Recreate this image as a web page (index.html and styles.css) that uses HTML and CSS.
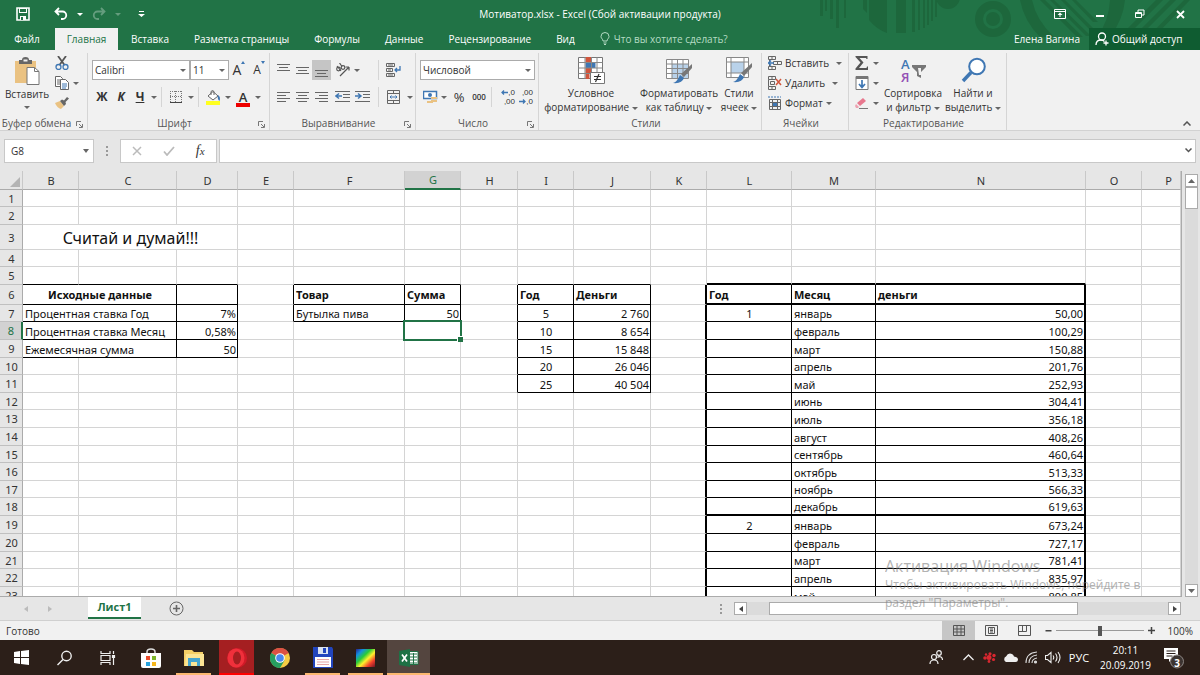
FILE: index.html
```html
<!DOCTYPE html>
<html lang="ru">
<head>
<meta charset="utf-8">
<title>Мотиватор.xlsx - Excel</title>
<link rel="stylesheet" href="styles.css">
</head>
<body>
<header class="top">
  <svg class="pattern" width="380" height="50" viewBox="0 0 380 50" fill="#1d673c">
    <path d="M0 0h3v16h-3zM5 0h2v11h-2zM10 0h3v19h-3zM16 0h3v28h-3zM24 0h2v18h-2z"/>
    <path d="M43 0h4v13l-4-4zM49 0h18v33a40 40 0 0 1-18-13zM76 0h10v33h-10zM92 0h3v32h-3zM98 0h2v30h-2zM103 0h2v28h-2zM107 0h2v25h-2zM111 0h2v21h-2zM115 0h2v17h-2z"/>
    <circle cx="128" cy="-3" r="12"/>
    <g fill="none" stroke="#1d673c"><circle cx="173" cy="19" r="14" stroke-width="8"/></g><circle cx="173" cy="19" r="7"/>
    <path d="M200 0h12q4 20 22 37h-14q-16-16-20-37zM220 0h5l38 37h-6zM230 0h4l37 36h-5zM241 0h4l30 30h-5zM252 0h4l22 22h-5zM290 0h15q-2 20-15 37h-13q12-16 13-37zM336 0h7l-30 30h-7zM350 0h6l-34 34h-6zM364 0h6l-36 37h-6z"/>
  </svg>
  <div class="titlebar">
    <div class="qat">
      <button class="w46" aria-label="Сохранить"><svg width="14" height="14" viewBox="0 0 14 14"><path d="M1 1h12v12H1z" fill="none" stroke="#fff" stroke-width="1.6"/><path d="M3 1h8v5H3z" fill="#fff"/><path d="M4 2h6v3H4z" fill="#217346"/><path d="M4 9h6v4H4z" fill="#fff"/><path d="M5 10h2v3H5z" fill="#217346"/></svg></button>
      <button class="w30" aria-label="Отменить"><svg width="14" height="14" viewBox="0 0 14 14" fill="none" stroke="#fff" stroke-width="1.8"><path d="M5 1 1.500 4.500 5 8M2 4.500h6.500a3.700 3.700 0 0 1 0 7.500H7"/></svg></button>
      <button class="w8" aria-label="История отмены"><i class="caret"></i></button>
      <button class="w30 dim" aria-label="Вернуть"><svg width="14" height="14" viewBox="0 0 14 14" fill="none" stroke="#fff" stroke-width="1.800"><path d="M9 1l3.500 3.500L9 8M12 4.500H5.500a3.700 3.700 0 0 0 0 7.500H7"/></svg></button>
      <button class="w8 dim" aria-label="История возврата"><i class="caret"></i></button>
      <button class="w39" aria-label="Настройка панели"><svg width="7" height="7" viewBox="0 0 7 7" fill="#fff"><path d="M1 0h5v1H1zM0 3h7L3.500 6z"/></svg></button>
    </div>
    <div class="title">Мотиватор.xlsx - Excel (Сбой активации продукта)</div>
    <div class="winbtns">
      <button aria-label="Параметры ленты"><svg width="12" height="10" viewBox="0 0 12 10"><path d="M.5.5h11v9H.5zM.5 2.500h11" fill="none" stroke="#fff"/><path d="M6 3.500 3.500 6h2v2h1V6h2z" fill="#fff"/></svg></button>
      <button aria-label="Свернуть"><svg width="9" height="9" viewBox="0 0 9 9"><path d="M0 5h8v2H0z" fill="#fff"/></svg></button>
      <button aria-label="Восстановить"><svg width="10" height="10" viewBox="0 0 10 10" fill="none" stroke="#fff"><path d="M.5 3.500h6v5h-6zM.5 4.500h6M3 3V1h6v5H7"/></svg></button>
      <button aria-label="Закрыть"><svg width="9" height="9" viewBox="0 0 9 9" stroke="#fff" stroke-width="1.800"><path d="M1 1l7 7M8 1 1 8"/></svg></button>
    </div>
  </div>
  <nav class="tabs">
    <button class="file">Файл</button><button class="on">Главная</button><button>Вставка</button><button>Разметка страницы</button><button>Формулы</button><button>Данные</button><button>Рецензирование</button><button>Вид</button>
    <button class="tell"><svg width="10" height="14" viewBox="0 0 10 14" fill="none" stroke="#b5dcc4"><path d="M3 9C3 7 1 6.500 1 4.500a4 4 0 0 1 8 0C9 6.500 7 7 7 9zM3.500 11h3M4 12.500h2"/></svg>Что вы хотите сделать?</button>
    <span class="user">Елена Вагина</span>
    <button class="share"><svg width="14" height="14" viewBox="0 0 14 14" fill="none" stroke="#fff" stroke-width="1.300"><circle cx="7" cy="4.500" r="3.500"/><path d="M1 13c0-3 2-5 5-5 1.500 0 2.500.5 3.500 1.500M11 8.500v5M8.500 11h5"/></svg>Общий доступ</button>
  </nav>
</header>

<section class="ribbon">
  <div class="group clip">
    <div class="body">
      <button class="big paste"><svg width="26" height="28" viewBox="0 0 26 28"><path d="M1 4h21v22H1z" fill="#eac282"/><path d="M5 3h3q0-3 3.500-3T15 3h3v4H5z" fill="#666"/><path d="M9.500 2.500h4v2h-4z" fill="#f1f1f1"/><path d="M13 10.500h7.500l4.500 4V27.500H13z" fill="#fff" stroke="#777"/><path d="M20.500 10.500v4H25" fill="none" stroke="#777"/></svg><span>Вставить</span><i class="caret"></i></button>
      <div class="col">
        <button aria-label="Вырезать"><svg width="14" height="14" viewBox="0 0 14 14" fill="none"><path d="M3 0l6.500 9M11 0 4.500 9" stroke="#555" stroke-width="1.800"/><circle cx="3.500" cy="11" r="2.500" stroke="#3f77b3" stroke-width="1.300"/><circle cx="10.500" cy="11" r="2.500" stroke="#3f77b3" stroke-width="1.300"/></svg></button>
        <button aria-label="Копировать"><svg width="14" height="14" viewBox="0 0 14 14" fill="#fff" stroke="#666"><path d="M.5.5h5l2 2v8h-7zM2 4h3M2 6h3M2 8h3"/><path d="M5.500 3.500h5l3 3v7h-8z"/><path d="M7 8h5M7 10h5M7 12h4" stroke="#3f77b3"/></svg></button>
        <button aria-label="Формат по образцу"><svg width="14" height="12" viewBox="0 0 14 12"><path d="M0 6l5-2 4 5-3 3q-4-1-6-6z" fill="#eac282"/><path d="M5 4l2-1.500 2 1L12 0l2 1.500-3.500 3.500.5 2-2 2z" fill="#666"/></svg></button>
      </div>
      <button class="copyarr" aria-label="Варианты копирования"><i class="caret"></i></button>
    </div>
    <div class="label">Буфер обмена<svg class="launch" width="7" height="7" viewBox="0 0 7 7" fill="none" stroke="#777"><path d="M.5 5V.5H5M3 3l3 3M6.500 3v3.500H3"/></svg></div>
  </div>

  <div class="group font">
    <div class="body rows">
      <div class="row">
        <span class="sel w98"><select aria-label="Шрифт"><option>Calibri</option></select><i class="caret"></i></span>
        <span class="sel w39"><select aria-label="Размер"><option>11</option></select><i class="caret"></i></span>
        <button class="w20 grow" aria-label="Увеличить">А<svg width="4" height="3" viewBox="0 0 4 3"><path d="M0 3h4L2 0z" fill="#3f77b3"/></svg></button>
        <button class="w20 shrink" aria-label="Уменьшить">А<svg width="4" height="3" viewBox="0 0 4 3"><path d="M0 0h4L2 3z" fill="#3f77b3"/></svg></button>
      </div>
      <div class="row">
        <button class="w20 fmt"><b>Ж</b></button><button class="w18 fmt"><b><em>К</em></b></button><button class="w20 fmt"><b><u>Ч</u></b></button><button class="w8" aria-label="Подчеркивание"><i class="caret"></i></button>
        <i class="sep"></i>
        <button class="w22" aria-label="Границы"><svg width="12" height="12" viewBox="0 0 12 12"><path d="M.5 0v11M5.500 0v11M11.500 0v11M0 .5h12M0 5.500h12" stroke="#777" stroke-dasharray="1 1"/><path d="M0 11.500h12" stroke="#444"/></svg></button><button class="w8" aria-label="Выбор границ"><i class="caret"></i></button>
        <i class="sep"></i>
        <button class="w22" aria-label="Заливка"><svg width="15" height="15" viewBox="0 0 15 15"><path d="M2 6l5-4.500L12 6 7 10z" fill="#fff" stroke="#666"/><path d="M5 5V1.500q1.500-2 3 0V5" fill="none" stroke="#666"/><path d="M12 5q3 2 1.500 6Q11 9 12 5z" fill="#3f77b3"/><path d="M0 11h14v4H0z" fill="#ffff20"/></svg></button><button class="w8" aria-label="Цвет заливки"><i class="caret"></i></button>
        <button class="w22 acol" aria-label="Цвет текста">А</button><button class="w8" aria-label="Выбор цвета"><i class="caret"></i></button>
      </div>
    </div>
    <div class="label">Шрифт<svg class="launch" width="7" height="7" viewBox="0 0 7 7" fill="none" stroke="#777"><path d="M.5 5V.5H5M3 3l3 3M6.500 3v3.500H3"/></svg></div>
  </div>

  <div class="group align">
    <div class="body rows">
      <div class="row">
        <button class="w19" aria-label="По верхнему краю"><svg width="13" height="13" viewBox="0 0 13 13" stroke="#666"><path d="M0 .5h13M2 3.500h9M0 6.500h13"/></svg></button>
        <button class="w19" aria-label="Посередине"><svg width="13" height="13" viewBox="0 0 13 13" stroke="#666"><path d="M0 3.500h13M2 6.500h9M0 9.500h13"/></svg></button>
        <button class="w19 pressed" aria-label="По нижнему краю"><svg width="13" height="13" viewBox="0 0 13 13" stroke="#666"><path d="M0 6.500h13M2 9.500h9M0 12.500h13"/></svg></button>
        <button class="w22" aria-label="Ориентация"><svg width="15" height="14" viewBox="0 0 15 14" fill="none" stroke="#555" stroke-width="1.200"><path d="M5 13 14 4M14 4h-3.500M14 4v3.500"/><circle cx="3.500" cy="6" r="1.800"/><path d="M2 3l4 5"/><circle cx="8" cy="4.500" r="1.800"/><path d="M4.500 0 7 3.500"/></svg></button><button class="w8" aria-label="Варианты ориентации"><i class="caret"></i></button>
        <i class="sep push"></i>
        <button class="w22" aria-label="Перенести текст"><svg width="15" height="14" viewBox="0 0 15 14" fill="none" stroke="#666"><path d="M.5.5h8v3h-8zM.5 5.500h6v3h-6zM.5 10.500h8v3h-8zM2 2h5M2 7h3M2 12h5"/><path d="M14 3v4H9M11 5 9 7l2 2" stroke="#3f77b3" stroke-width="1.300"/></svg></button><span class="w11"></span>
      </div>
      <div class="row">
        <button class="w19" aria-label="По левому краю"><svg width="13" height="11" viewBox="0 0 13 11" stroke="#666"><path d="M0 .5h13M0 3.500h9M0 6.500h13M0 9.500h9"/></svg></button>
        <button class="w19" aria-label="По центру"><svg width="13" height="11" viewBox="0 0 13 11" stroke="#666"><path d="M0 .5h13M2 3.500h9M0 6.500h13M2 9.500h9"/></svg></button>
        <button class="w19" aria-label="По правому краю"><svg width="13" height="11" viewBox="0 0 13 11" stroke="#666"><path d="M0 .5h13M4 3.500h9M0 6.500h13M4 9.500h9"/></svg></button>
        <button class="w22" aria-label="Уменьшить отступ"><svg width="15" height="12" viewBox="0 0 15 12" stroke="#666"><path d="M0 .5h15M8 3.500h7M8 6.500h7M0 10.500h15"/><path d="M1 5h6M4 2.500 1 5l3 2.500" fill="none" stroke="#3f77b3" stroke-width="1.500"/></svg></button>
        <button class="w18" aria-label="Увеличить отступ"><svg width="15" height="12" viewBox="0 0 15 12" stroke="#666"><path d="M0 .5h15M8 3.500h7M8 6.500h7M0 10.500h15"/><path d="M0 5h6M3 2.500 6 5 3 7.500" fill="none" stroke="#3f77b3" stroke-width="1.500"/></svg></button>
        <i class="sep push"></i>
        <button class="w22" aria-label="Объединить"><svg width="13" height="14" viewBox="0 0 13 14" fill="none" stroke="#666"><path d="M.5.5h12v13H.5zM.5 3.500h12M.5 10.500h12M6.500.5v3M6.500 10.500v3"/><path d="M3 7h7M4.500 5.500 3 7l1.500 1.500M8.500 5.500 10 7 8.500 8.500" stroke="#3f77b3"/></svg></button><button class="w11" aria-label="Варианты объединения"><i class="caret"></i></button>
      </div>
    </div>
    <div class="label">Выравнивание<svg class="launch" width="7" height="7" viewBox="0 0 7 7" fill="none" stroke="#777"><path d="M.5 5V.5H5M3 3l3 3M6.500 3v3.500H3"/></svg></div>
  </div>

  <div class="group num">
    <div class="body rows">
      <div class="row"><span class="sel w115"><select aria-label="Числовой формат"><option>Числовой</option></select><i class="caret"></i></span></div>
      <div class="row">
        <button class="w20" aria-label="Денежный формат"><svg width="15" height="15" viewBox="0 0 15 15"><path d="M.5 1.500h13v7H.5z" fill="#fff" stroke="#3f77b3" stroke-width="1.500"/><circle cx="7" cy="5" r="2" fill="#3f77b3"/><path d="M8 7h6v2H8zM8 10h6v2H8zM4 11h6v2H4z" fill="#eac282"/></svg></button><button class="w8" aria-label="Валюта"><i class="caret"></i></button>
        <button class="w22 pct">%</button><button class="w18 ths">000</button>
        <i class="sep"></i>
        <button class="w20 dec" aria-label="Увеличить разрядность"><span><svg width="7" height="5" viewBox="0 0 7 5" fill="none" stroke="#3f77b3" stroke-width="1.300"><path d="M7 2.500H1M3 .5l-2 2 2 2"/></svg>,0</span><span>,00</span></button>
        <button class="w18 dec" aria-label="Уменьшить разрядность"><span>,00</span><span><svg width="7" height="5" viewBox="0 0 7 5" fill="none" stroke="#3f77b3" stroke-width="1.300"><path d="M0 2.500h6M4 .5l2 2-2 2"/></svg>,0</span></button>
      </div>
    </div>
    <div class="label">Число<svg class="launch" width="7" height="7" viewBox="0 0 7 7" fill="none" stroke="#777"><path d="M.5 5V.5H5M3 3l3 3M6.500 3v3.500H3"/></svg></div>
  </div>

  <div class="group styles">
    <div class="body">
      <button class="big w100"><svg width="27" height="27" viewBox="0 0 27 27"><path d="M.5.5h24v21H.5z" fill="#fff" stroke="#777"/><path d="M7.500 0h6v5h-6zM7.500 11h6v5h-6z" fill="#d1553c"/><path d="M7.500 6h10v5h-10z" fill="#3f77b3"/><path d="M7.500 17h4v5h-4z" fill="#d1553c"/><path d="M.5 5.500h24M.5 11h24M.5 16.500h24M7 0v22M13.500 0v22M19 0v22" fill="none" stroke="#888"/><path d="M12.500 15.500h14v11h-14z" fill="#fff" stroke="#777"/><path d="M16 19.500h7M16 22.500h7M21 17l-3.500 8" stroke="#333" stroke-width="1.200"/></svg><span>Условное</span><span>форматирование <i class="caret"></i></span></button>
      <button class="big w76"><svg width="27" height="27" viewBox="0 0 27 27"><path d="M.5 2.500h22v19H.5z" fill="#fff" stroke="#888"/><path d="M6 7h16v14H6z" fill="#b9d2ea"/><path d="M.5 7h22M.5 11.500h22M.5 16.500h22M6 2v20M11.500 2v20M17 2v20" stroke="#888" fill="none"/><path d="M26 7v4l-8 9-3-3z" fill="#777"/><path d="M14 18l4 3q-2 6-11 5 4-1 7-8z" fill="#3f77b3"/></svg><span>Форматировать</span><span>как таблицу <i class="caret"></i></span></button>
      <button class="big w44"><svg width="27" height="27" viewBox="0 0 27 27"><path d="M.5.5h22v20H.5z" fill="#fff" stroke="#888"/><path d="M5 5h13v11H5z" fill="#b9d2ea"/><path d="M.5 5h22M.5 16h22M5 0v20M18 0v20" stroke="#888" fill="none"/><path d="M26 6v4l-8 9-3-3z" fill="#777"/><path d="M14 17l4 3q-2 6-11 5 4-1 7-8z" fill="#3f77b3"/></svg><span>Стили</span><span>ячеек <i class="caret"></i></span></button>
    </div>
    <div class="label">Стили</div>
  </div>

  <div class="group cells">
    <div class="body lines">
      <button><svg width="14" height="14" viewBox="0 0 14 14" fill="none" stroke="#666"><path d="M.5.5h7v3h-7zM4 .5v3M.5 10.500h7v3h-7zM4 10.500v3M5.500 5.500h8v3h-8zM9.500 5.500v3M1.500 3.500v7"/><path d="M0 7h6M3 4.500.500 7 3 9.500" stroke="#3f77b3" stroke-width="1.400"/></svg><span>Вставить</span><i class="caret wide"></i></button>
      <button><svg width="14" height="14" viewBox="0 0 14 14" fill="none" stroke="#666"><path d="M.5.5h7v3h-7zM4 .5v3M.5 10.500h7v3h-7zM4 10.500v3M2.500 5.500h4v3h-4zM.5 3.500v7"/><path d="M8 3l5 6M13 3 8 9" stroke="#d1553c" stroke-width="1.500"/></svg><span>Удалить</span><i class="caret wide"></i></button>
      <button><svg width="14" height="14" viewBox="0 0 14 14" fill="none" stroke="#666"><path d="M1.500 3.500h11v10h-11zM1.500 6.500h11M1.500 10.500h11M4.500 3.500v10M9.500 3.500v10"/><path d="M4.500 6.500h5v4h-5z" fill="#3f77b3"/><path d="M0 1h13" stroke="#3f77b3" stroke-dasharray="2 1"/></svg><span>Формат</span><i class="caret"></i></button>
    </div>
    <div class="label">Ячейки</div>
  </div>

  <div class="group edit">
    <div class="body">
      <div class="lines">
        <button aria-label="Сумма"><svg width="14" height="14" viewBox="0 0 14 14"><path d="M.5 0h12v3h-1L11 2H4.500l4 4.500L4 12h7.500l.5-1.500h1V14H.5v-1.500l5-6-5-5.500z" fill="#555"/></svg><i class="caret"></i></button>
        <button aria-label="Заполнить"><svg width="14" height="14" viewBox="0 0 14 14"><path d="M1 .5h12v13H1z" fill="#fff" stroke="#777"/><path d="M1 0h12v3H1z" fill="#777"/><path d="M7 4v7M4 8l3 3.500L10 8" fill="none" stroke="#3f77b3" stroke-width="1.700"/></svg><i class="caret"></i></button>
        <button aria-label="Очистить"><svg width="14" height="13" viewBox="0 0 14 13"><path d="M2 6l6-5 3 3-6 5z" fill="#e8788e"/><path d="M1 7l3 3-1 1H1L0 9z" fill="#eda3b1"/><path d="M4 11.500h9" stroke="#777"/></svg><i class="caret"></i></button>
      </div>
      <button class="big w64"><svg width="27" height="27" viewBox="0 0 27 27"><text x="1" y="12" class="az" fill="#3f77b3">А</text><text x="1" y="25" class="az" fill="#9350b5">Я</text><path d="M12 8h14v2l-5 5v6l-4-2v-4l-5-5z" fill="#777"/><path d="M18 11h3v7h-2z" fill="#f1f1f1"/></svg><span>Сортировка</span><span>и фильтр <i class="caret"></i></span></button>
      <button class="big w56"><svg width="27" height="27" viewBox="0 0 27 27" fill="none"><circle cx="17" cy="9.500" r="7.800" fill="#fff" stroke="#3f77b3" stroke-width="2"/><path d="M11 15.500 3 24" stroke="#3f77b3" stroke-width="3.500"/></svg><span>Найти и</span><span>выделить <i class="caret"></i></span></button>
    </div>
    <div class="label">Редактирование</div>
  </div>
  <button class="collapse" aria-label="Свернуть ленту"><svg width="8" height="5" viewBox="0 0 8 5" fill="none" stroke="#555" stroke-width="1.500"><path d="M.5 4.500 4 1l3.500 3.500"/></svg></button>
</section>

<section class="formula">
  <span class="namebox"><input aria-label="Имя ячейки" value="G8"><i class="caret"></i></span>
  <svg class="dots" width="2" height="10" viewBox="0 0 2 10" fill="#999"><path d="M0 0h2v2H0zM0 4h2v2H0zM0 8h2v2H0z"/></svg>
  <div class="fx">
    <button aria-label="Отмена"><svg width="10" height="10" viewBox="0 0 10 10" stroke="#bbb" stroke-width="1.500"><path d="M1 1l8 8M9 1 1 9"/></svg></button>
    <button aria-label="Ввод"><svg width="12" height="10" viewBox="0 0 12 10" fill="none" stroke="#bbb" stroke-width="1.800"><path d="M1 5.500 4 9l7-8"/></svg></button>
    <button class="fn"><i>f<small>x</small></i></button>
  </div>
  <span class="finput"><input aria-label="Строка формул"><svg width="7" height="5" viewBox="0 0 7 5" fill="none" stroke="#555" stroke-width="1.500"><path d="M.5.500 3.500 3.500 6.500.500"/></svg></span>
</section>

<main class="sheet">
  <div class="gridwrap">
  <table>
    <colgroup><col class="c23"><col class="c56"><col class="c98"><col class="c61"><col class="c56"><col class="c111"><col class="c56"><col class="c57"><col class="c56"><col class="c77"><col class="c56"><col class="c85"><col class="c84"><col class="c210"><col class="c56"><col></colgroup>
    <thead><tr><th class="corner"><svg width="10" height="10" viewBox="0 0 10 10"><path d="M10 0v10H0z" fill="#b4b4b4"/></svg></th><th>B<th>C<th>D<th>E<th>F<th class="cur">G<th>H<th>I<th>J<th>K<th>L<th>M<th>N<th>O<th class="p">P</tr></thead>
    <tbody>
    <tr class="h17"><th>1<td><td><td><td><td><td><td><td><td><td><td><td><td><td><td></tr>
    <tr class="h18"><th>2<td><td><td><td><td><td><td><td><td><td><td><td><td><td><td></tr>
    <tr class="h25"><th>3<td colspan="3" class="head">Считай и думай!!!<td><td><td><td><td><td><td><td><td><td><td><td></tr>
    <tr class="h17"><th>4<td><td><td><td><td><td><td><td><td><td><td><td><td><td><td></tr>
    <tr class="h18"><th>5<td class="b"><td class="b"><td class="b"><td><td class="b"><td class="b"><td><td class="b"><td class="b"><td><td class="bb"><td class="bb"><td class="bb"><td><td></tr>
    <tr class="h20 bold"><th>6<td colspan="2" class="x c">Исходные данные<td class="x"><td class="r"><td class="x">Товар<td class="x">Сумма<td class="r"><td class="x">Год<td class="x">Деньги<td class="rr"><td class="r bb">Год<td class="r bb">Месяц<td class="rr bb">деньги<td><td></tr>
    <tr class="h17"><th>7<td colspan="2" class="x">Процентная ставка Год<td class="x n">7%<td class="r"><td class="x">Бутылка пива<td class="x n">50<td class="r"><td class="x c">5<td class="x n">2 760<td class="rr"><td class="x c">1<td class="x">январь<td class="rr b n">50,00<td><td></tr>
    <tr class="h18"><th class="cur">8<td colspan="2" class="x">Процентная ставка Месяц<td class="x n">0,58%<td><td><td class="active"><td class="r"><td class="x c">10<td class="x n">8 654<td class="rr"><td class="x"><td class="x">февраль<td class="rr b n">100,29<td><td></tr>
    <tr class="h18"><th>9<td colspan="2" class="x">Ежемесячная сумма<td class="x n">50<td><td><td><td class="r"><td class="x c">15<td class="x n">15 848<td class="rr"><td class="x"><td class="x">март<td class="rr b n">150,88<td><td></tr>
    <tr class="h17"><th>10<td><td><td><td><td><td><td class="r"><td class="x c">20<td class="x n">26 046<td class="rr"><td class="x"><td class="x">апрель<td class="rr b n">201,76<td><td></tr>
    <tr class="h18"><th>11<td><td><td><td><td><td><td class="r"><td class="x c">25<td class="x n">40 504<td class="rr"><td class="x"><td class="x">май<td class="rr b n">252,93<td><td></tr>
    <tr class="h17"><th>12<td><td><td><td><td><td><td><td><td><td class="rr"><td class="x"><td class="x">июнь<td class="rr b n">304,41<td><td></tr>
    <tr class="h18"><th>13<td><td><td><td><td><td><td><td><td><td class="rr"><td class="x"><td class="x">июль<td class="rr b n">356,18<td><td></tr>
    <tr class="h18"><th>14<td><td><td><td><td><td><td><td><td><td class="rr"><td class="x"><td class="x">август<td class="rr b n">408,26<td><td></tr>
    <tr class="h17"><th>15<td><td><td><td><td><td><td><td><td><td class="rr"><td class="x"><td class="x">сентябрь<td class="rr b n">460,64<td><td></tr>
    <tr class="h18"><th>16<td><td><td><td><td><td><td><td><td><td class="rr"><td class="x"><td class="x">октябрь<td class="rr b n">513,33<td><td></tr>
    <tr class="h17"><th>17<td><td><td><td><td><td><td><td><td><td class="rr"><td class="x"><td class="x">ноябрь<td class="rr b n">566,33<td><td></tr>
    <tr class="h18"><th>18<td><td><td><td><td><td><td><td><td><td class="rr"><td class="r bb"><td class="r bb">декабрь<td class="rr bb n">619,63<td><td></tr>
    <tr class="h18"><th>19<td><td><td><td><td><td><td><td><td><td class="rr"><td class="x c">2<td class="x">январь<td class="rr b n">673,24<td><td></tr>
    <tr class="h18"><th>20<td><td><td><td><td><td><td><td><td><td class="rr"><td class="x"><td class="x">февраль<td class="rr b n">727,17<td><td></tr>
    <tr class="h17"><th>21<td><td><td><td><td><td><td><td><td><td class="rr"><td class="x"><td class="x">март<td class="rr b n">781,41<td><td></tr>
    <tr class="h18"><th>22<td><td><td><td><td><td><td><td><td><td class="rr"><td class="x"><td class="x">апрель<td class="rr b n">835,97<td><td></tr>
    <tr class="h18"><th>23<td><td><td><td><td><td><td><td><td><td class="rr"><td class="x"><td class="x">май<td class="rr b n">890,85<td><td></tr>
    </tbody>
  </table>
  </div>
  <div class="vscroll">
    <button aria-label="Вверх"><svg width="7" height="4" viewBox="0 0 7 4"><path d="M0 4h7L3.500 0z" fill="#666"/></svg></button>
    <i class="thumb"></i>
    <button class="end" aria-label="Вниз"><svg width="7" height="4" viewBox="0 0 7 4"><path d="M0 0h7L3.500 4z" fill="#666"/></svg></button>
  </div>
</main>

<section class="sheettabs">
  <button class="nav" aria-label="Предыдущий лист"><svg width="4" height="6" viewBox="0 0 4 6"><path d="M4 0v6L0 3z" fill="#bbb"/></svg></button>
  <button class="nav" aria-label="Следующий лист"><svg width="4" height="6" viewBox="0 0 4 6"><path d="M0 0v6l4-3z" fill="#bbb"/></svg></button>
  <button class="sheettab">Лист1</button>
  <button class="add" aria-label="Новый лист"><svg width="15" height="15" viewBox="0 0 15 15" fill="none" stroke="#666"><circle cx="7.500" cy="7.500" r="6.500"/><path d="M7.500 4v7M4 7.500h7" stroke-width="1.600"/></svg></button>
  <svg class="dots hd" width="2" height="10" viewBox="0 0 2 10" fill="#999"><path d="M0 0h2v2H0zM0 4h2v2H0zM0 8h2v2H0z"/></svg>
  <div class="hscroll">
    <button aria-label="Влево"><svg width="4" height="6" viewBox="0 0 4 6"><path d="M4 0v6L0 3z" fill="#444"/></svg></button>
    <div class="track"><i class="thumb"></i></div>
    <button aria-label="Вправо"><svg width="4" height="6" viewBox="0 0 4 6"><path d="M0 0v6l4-3z" fill="#444"/></svg></button>
  </div>
</section>

<footer class="status">
  <span class="ready">Готово</span>
  <button class="view on" aria-label="Обычный"><svg width="12" height="11" viewBox="0 0 12 11" fill="none" stroke="#555"><path d="M.5.5h11v10H.5zM.5 4h11M.5 7h11M4 .5v10M8 .5v10"/></svg></button>
  <button class="view" aria-label="Разметка страницы"><svg width="13" height="11" viewBox="0 0 13 11" fill="none" stroke="#555"><path d="M.5.5h12v10H.5zM3.500 2.500h6v6h-6zM5 4h3M5 5.500h3M5 7h3"/></svg></button>
  <button class="view" aria-label="Страничный режим"><svg width="13" height="11" viewBox="0 0 13 11" fill="none" stroke="#555"><path d="M.5.5h12v10H.5zM4.500.5v6M8.500.5v6M.5 6.500h8"/></svg></button>
  <button class="zoomb" aria-label="Уменьшить"><svg width="7" height="7" viewBox="0 0 7 7"><path d="M.5 3h6v1.500h-6z" fill="#444"/></svg></button>
  <input type="range" aria-label="Масштаб" min="10" max="190" value="100">
  <button class="zoomb" aria-label="Увеличить"><svg width="7" height="7" viewBox="0 0 7 7"><path d="M0 3.500h7M3.500 0v7" stroke="#444" stroke-width="1.500"/></svg></button>
  <span class="pc">100%</span>
</footer>

<nav class="taskbar">
  <button aria-label="Пуск"><svg width="15" height="15" viewBox="0 0 15 15" fill="#fff"><path d="M0 2l6-1v6H0zM7 1l8-1v7H7zM0 8h6v6l-6-1zM7 8h8v7l-8-1z"/></svg></button>
  <button aria-label="Поиск"><svg width="16" height="16" viewBox="0 0 16 16" fill="none" stroke="#eee" stroke-width="1.400"><circle cx="9.500" cy="6" r="4.700"/><path d="M6 9.500.500 15"/></svg></button>
  <button aria-label="Представление задач"><svg width="16" height="14" viewBox="0 0 16 14" fill="none" stroke="#eee" stroke-width="1.200"><path d="M1 0v2.500h9V0M1 4.500h9v5H1zM1 14v-2.500h9V14M13.500 0v3M13.500 7v7"/><path d="M12.500 4.500h2v2h-2z" fill="#eee"/></svg></button>
  <button aria-label="Магазин"><svg width="20" height="20" viewBox="0 0 20 20"><path d="M6 6V4q0-3 4-3t4 3v2" fill="none" stroke="#ddd" stroke-width="1.500"/><path d="M0 5h20v13q0 2-2 2H2q-2 0-2-2z" fill="#fff"/><path d="M5 8h4v4H5z" fill="#ea4b2c"/><path d="M11 8h4v4h-4z" fill="#7db52a"/><path d="M5 14h4v4H5z" fill="#28a4df"/><path d="M11 14h4v4h-4z" fill="#f8b71c"/></svg></button>
  <button class="run" aria-label="Проводник"><svg width="20" height="18" viewBox="0 0 20 18"><path d="M0 1h8l2 2h9v14H0z" fill="#f4cf66"/><path d="M2 5h18v12H1z" fill="#fbe494"/><path d="M4 17V9h12v8h-3v-4H7v4z" fill="#45a5cf"/></svg></button>
  <button class="run opera" aria-label="Opera"><svg width="20" height="20" viewBox="0 0 20 20"><circle cx="10" cy="10" r="10" fill="#d01a28"/><ellipse cx="9" cy="10" rx="8.500" ry="9.500" fill="#f0303b"/><ellipse cx="10" cy="10" rx="4" ry="6.500" fill="#a51f21"/></svg></button>
  <button aria-label="Chrome"><svg width="20" height="20" viewBox="0 0 20 20"><circle cx="10" cy="10" r="10" fill="#f6cd45"/><path d="M10 10 1.300 5A10 10 0 0 1 18.700 5z" fill="#dc5144"/><path d="M10 10 1.300 5A10 10 0 0 0 10 20l4.500-7.500z" fill="#269e60"/><circle cx="10" cy="10" r="4.800" fill="#fff"/><circle cx="10" cy="10" r="3.800" fill="#4a88ef"/></svg></button>
  <button class="run" aria-label="Total Commander"><svg width="20" height="21" viewBox="0 0 20 21"><path d="M0 0h19l1 2v19H0z" fill="#2245bd"/><path d="M5 0h10v7H5z" fill="#d9e1ef"/><path d="M10 1h3v5h-3z" fill="#2245bd"/><path d="M2 10h16v10H2z" fill="#fff"/><path d="M4 12.500h12M4 15h12M4 17.500h12" stroke="#e6a6a6"/></svg></button>
  <button class="run" aria-label="Просмотр"><svg width="19" height="18" viewBox="0 0 19 18"><defs><linearGradient id="rb" x1="0" y1="0" x2="1" y2="1"><stop offset="0" stop-color="#27208f"/><stop offset=".2" stop-color="#148fe0"/><stop offset=".4" stop-color="#28cc38"/><stop offset=".58" stop-color="#fff22c"/><stop offset=".78" stop-color="#f4412b"/><stop offset="1" stop-color="#6f1527"/></linearGradient></defs><path d="M0 0h19v18H0z" fill="url(#rb)"/></svg></button>
  <button class="run cur" aria-label="Excel"><svg width="20" height="18" viewBox="0 0 20 18"><path d="M9 2.500h10v13H9z" fill="#fff" stroke="#1e7145"/><path d="M11 5h7M11 8h7M11 11h7M11 14h7M14.500 4v11" stroke="#1e7145"/><path d="M0 2l11-2v18L0 16z" fill="#1e7145"/><path d="M3 5.500l5 7M8 5.500l-5 7" stroke="#fff" stroke-width="1.700"/></svg></button>
  <div class="tray">
    <button class="people" aria-label="Люди"><svg width="14" height="15" viewBox="0 0 14 15" fill="none" stroke="#eee" stroke-width="1.200"><circle cx="5" cy="7" r="2.500"/><path d="M1 14q0-4 4-4t4 4"/><circle cx="10" cy="3" r="2.300"/><path d="M8.500 7.500Q10 6 12 7q1.500 1 1.500 3"/></svg></button>
    <button aria-label="Скрытые значки"><svg width="11" height="7" viewBox="0 0 11 7" fill="none" stroke="#eee" stroke-width="1.300"><path d="M.5 6 5.500 1l5 5"/></svg></button>
    <button aria-label="Антивирус"><svg width="13" height="11" viewBox="0 0 13 11" fill="#da2730"><circle cx="6" cy="5.500" r="2.500"/><circle cx="2" cy="6" r="1.800"/><circle cx="7" cy="1.800" r="1.600"/><circle cx="11" cy="3.500" r="1.700"/><circle cx="10.500" cy="7.500" r="1.600"/><circle cx="6" cy="9.500" r="1.400"/><circle cx="3" cy="2.500" r="1.200"/></svg></button>
    <button aria-label="OneDrive"><svg width="15" height="9" viewBox="0 0 15 9" fill="#eee"><path d="M3 9a3 3 0 0 1 0-5.500Q5-.5 9 1q1.500.5 2 2.500 4 .5 4 3Q15 9 12.500 9z"/></svg></button>
    <button aria-label="Сеть"><svg width="13" height="13" viewBox="0 0 13 13" fill="none" stroke="#ddd" stroke-width="1.100"><path d="M1 12Q1 2 12 1M4 12q0-7 8-8M7 12q0-4 5-5"/><circle cx="10.500" cy="11" r="1" fill="#ddd"/></svg></button>
    <button aria-label="Громкость"><svg width="16" height="13" viewBox="0 0 16 13" fill="none" stroke="#eee" stroke-width="1.100"><path d="M.5 4.500h2l3.500-3v10l-3.500-3h-2zM8 4.500q1.500 2 0 4M10.500 2.500q3 4 0 8M13 1q4 5.500 0 11"/></svg></button>
    <button class="lang">РУС</button>
    <button class="clock"><span>20:11</span><span>20.09.2019</span></button>
    <button class="note" aria-label="Уведомления"><svg width="22" height="22" viewBox="0 0 22 22"><path d="M1 1h14v11H9l-3 3v-3H1z" fill="#fff"/><path d="M3.500 4h9M3.500 6.500h9M3.500 9h6" stroke="#2b1f1a"/><circle cx="14" cy="14.500" r="6.500" fill="#3c3431" stroke="#8b8583"/></svg><b>3</b></button>
  </div>
</nav>

<aside class="watermark"><p class="wt">Активация Windows</p><p>Чтобы активировать Windows, перейдите в раздел "Параметры".</p></aside>
</body>
</html>
```
FILE: styles.css
```css
* { box-sizing: border-box; }
body {
  margin: 0;
  height: 100vh;
  display: flex;
  flex-direction: column;
  overflow: hidden;
  position: relative;
  background: #e6e6e6;
  color: #333;
  font: 10px/14px "Open Sans", "Noto Sans", sans-serif;
}
button {
  display: inline-flex;
  align-items: center;
  justify-content: center;
  flex: none;
  margin: 0;
  padding: 0;
  border: 0;
  background: none;
  color: inherit;
  font: inherit;
  white-space: nowrap;
}
svg { flex: none; }
input, select { font: inherit; color: inherit; border-radius: 0; }
.caret {
  display: inline-block;
  flex: none;
  border: 3px solid transparent;
  border-top-color: #666;
  border-bottom: 0;
  vertical-align: middle;
}
.w8 { width: 8px; }
.w11 { width: 11px; }
.w18 { width: 18px; }
.w19 { width: 19px; }
.w20 { width: 20px; }
.w22 { width: 22px; }
.w30 { width: 30px; }
.w39 { width: 39px; }
.w44 { width: 44px; }
.w46 { width: 46px; }
.w56 { width: 56px; }
.w64 { width: 64px; }
.w76 { width: 76px; }
.w98 { width: 98px; }
.w100 { width: 100px; }
.w115 { width: 115px; }

/* Title bar and ribbon tabs */
.top { position: relative; background: #217346; color: #fff; flex: none; font-weight: 500; }
.pattern { position: absolute; right: 0; top: 0; }
.titlebar { position: relative; display: flex; height: 28px; align-items: stretch; }
.qat, .winbtns { flex: 1; display: flex; }
.winbtns { justify-content: flex-end; }
.winbtns button { width: 40px; }
.titlebar .caret { border-top-color: #fff; }
.title { line-height: 29px; }
.dim { opacity: .3; }
.tabs { position: relative; display: flex; gap: 1px; height: 22px; }
.tabs button { padding: 0 12px; }
.tabs .file { width: 54px; }
.tabs .on { width: 63px; background: #f1f1f1; color: #217346; }
.tabs .tell { color: #b5dcc4; gap: 4px; }
.user { margin-left: auto; padding-right: 8px; line-height: 22px; }
.tabs .share { width: 111px; padding: 0 0 0 6px; justify-content: flex-start; gap: 3px; background: #0f5c31; }

/* Ribbon */
.ribbon { display: flex; height: 81px; flex: none; background: #f1f1f1; border-bottom: 1px solid #d2d2d2; padding-top: 3px; }
.group { display: flex; flex-direction: column; border-right: 1px solid #d5d5d5; flex: none; }
.body { flex: 1; display: flex; }
.label { position: relative; text-align: center; color: #555; padding-right: 8px; line-height: 13px; white-space: nowrap; }
.launch { position: absolute; right: 4px; top: 4px; }
.clip { width: 88px; }
.clip .label { padding: 0 14px 0 0; }
.font { width: 182px; }
.align { width: 146px; }
.num { width: 123px; }
.styles { width: 223px; }
.styles .body { padding-left: 2px; }
.cells { width: 87px; }
.edit { width: 158px; }
.rows { flex-direction: column; padding: 6px 0 0 4px; gap: 5px; }
.row { display: flex; height: 22px; align-items: center; }
.big { flex-direction: column; justify-content: flex-start; padding-top: 4px; }
.big svg { margin-bottom: 2px; }
.paste { width: 54px; }
.paste .caret { margin-top: 5px; }
.col { display: flex; flex-direction: column; width: 16px; }
.col button { height: 20px; }
.copyarr { width: 12px; height: 60px; }
.sel { position: relative; display: flex; }
.sel select { appearance: none; width: 100%; height: 20px; border: 1px solid #ababab; background: #fff; padding: 0 2px; outline: 0; }
.sel .caret { position: absolute; right: 4px; top: 9px; }
.grow, .shrink { align-items: flex-start; font-size: 14px; line-height: 18px; }
.shrink { font-size: 12px; }
.fmt { font-size: 12px; }
.sep { width: 1px; height: 20px; background: #d5d5d5; margin: 0 3px; }
.push { margin-left: auto; }
.pressed { background: #c5c5c5; height: 20px; }
.acol { font-weight: 600; font-size: 13px; line-height: 11px; position: relative; }
.acol::after { content: ""; position: absolute; left: 4px; right: 4px; bottom: -4px; height: 4px; background: #e00; }
.pct { font-size: 13px; }
.ths { font-size: 8px; font-weight: 600; }
.dec { flex-direction: column; align-items: flex-end; font: 8px/9px "Liberation Sans", sans-serif; }
.dec span { display: flex; align-items: center; }
.lines { display: flex; flex-direction: column; padding: 0 0 0 6px; }
.lines button { height: 20px; justify-content: flex-start; gap: 3px; }
.lines .wide { margin-left: 4px; }
.edit .lines { width: 32px; }
.edit .lines button { gap: 4px; }
.az { font: 600 13px "Open Sans", sans-serif; }
.collapse { margin-left: auto; width: 26px; align-self: flex-end; height: 14px; }

/* Formula bar */
.formula { display: flex; align-items: center; height: 40px; flex: none; padding: 0 4px; }
.namebox { position: relative; display: flex; width: 90px; }
.namebox input { width: 100%; height: 24px; border: 1px solid #c8c8c8; background: #fff; padding: 0 6px; }
.namebox .caret { position: absolute; right: 5px; top: 10px; border-top-width: 4px; }
.dots { margin: 0 12px; }
.fx { display: flex; width: 97px; height: 24px; background: #fff; border: 1px solid #c8c8c8; }
.fx button { flex: 1; }
.fn { font: 14px/14px "Liberation Serif", serif; }
.fn small { font-size: 11px; }
.finput { position: relative; display: flex; flex: 1; margin-left: 2px; }
.finput input { width: 100%; height: 24px; border: 1px solid #c8c8c8; background: #fff; }
.finput svg { position: absolute; right: 4px; top: 9px; }

/* Worksheet */
.sheet { display: flex; flex: 1; min-height: 0; }
.gridwrap { flex: 1; min-width: 0; overflow: hidden; background: #fff; border-right: 1px solid #ababab; border-bottom: 1px solid #ababab; }
table { width: 100%; table-layout: fixed; border-collapse: separate; border-spacing: 0; color: #111; font-family: "Noto Sans", "Open Sans", sans-serif; font-size: 11px; }
.c23 { width: 23px; }
.c56 { width: 56px; }
.c57 { width: 57px; }
.c61 { width: 61px; }
.c77 { width: 77px; }
.c84 { width: 84px; }
.c85 { width: 85px; }
.c98 { width: 98px; }
.c111 { width: 111px; }
.c210 { width: 210px; }
th, td { padding: 0 1px 0 2px; line-height: 15px; border: 0 solid #d4d4d4; border-width: 0 1px 1px 0; white-space: nowrap; vertical-align: bottom; text-align: left; }
th { background: #e6e6e6; font-weight: 400; text-align: center; vertical-align: middle; color: #333; border-bottom-color: #c0c0c0; border-right-color: #ababab; }
thead th { height: 19px; border-color: #ababab; border-right-color: #c8c8c8; }
thead .corner { text-align: right; padding: 4px 2px 0 0; line-height: 10px; }
thead .p { text-align: right; padding-right: 8px; }
thead .cur { background: #d2d2d2; color: #217346; border-bottom: 2px solid #217346; }
tbody .cur { background: #d2d2d2; color: #217346; border-right: 2px solid #217346; }
.h17 { height: 17px; }
.h18 { height: 18px; }
.h20 { height: 20px; }
.h25 { height: 25px; }
.bold td { font-weight: 700; vertical-align: middle; }
td.c { text-align: center; }
td.n { text-align: right; }
td.head { text-align: center; font-size: 16px; line-height: 22px; }
td.b { border-bottom-color: #000; }
td.r { border-right-color: #000; }
td.x { border-color: #000; }
td.bb { border-bottom: 2px solid #000; }
td.rr { border-right: 2px solid #000; }
td.active { position: relative; }
.active::before { content: ""; position: absolute; inset: -2px; border: 2px solid #217346; }
.active::after { content: ""; position: absolute; right: -3px; bottom: -3px; width: 5px; height: 5px; background: #217346; border: 0 solid #fff; border-width: 1px 0 0 1px; }
.vscroll { width: 18px; display: flex; flex-direction: column; margin-top: 3px; padding: 0 2px 0 3px; background: linear-gradient(#dbdbdb, #dbdbdb) 3px 0 / 13px 100% no-repeat; }
.vscroll button, .hscroll button { width: 13px; height: 13px; background: #fff; border: 1px solid #ababab; }
.thumb { display: block; background: #fff; border: 1px solid #ababab; }
.vscroll .thumb { height: 22px; }
.vscroll .end { margin-top: auto; }

/* Sheet tabs */
.sheettabs { display: flex; align-items: center; height: 23px; flex: none; padding-left: 14px; }
.nav { width: 24px; }
.sheettab { width: 53px; height: 22px; margin: 0 28px 0 26px; align-self: flex-start; background: #fff; border-bottom: 2px solid #217346; color: #217346; font-weight: 700; font-size: 11px; }
.hd { margin-left: auto; }
.hscroll { display: flex; width: 447px; margin-right: 19px; }
.track { flex: 1; background: #dbdbdb; padding-left: 22px; }
.track .thumb { width: 309px; height: 13px; }

/* Status bar */
.status { display: flex; align-items: center; height: 20px; flex: none; background: #f1f1f1; border-top: 1px solid #d0d0d0; padding-right: 7px; }
.ready { margin-right: auto; padding-left: 6px; }
.view { width: 33px; height: 19px; }
.view.on { background: #c6c6c6; }
.zoomb { width: 15px; }
.status input { appearance: none; width: 88px; height: 13px; margin: 0; background: linear-gradient(#999, #999) 0 6px / 100% 1px no-repeat; }
.status input::-webkit-slider-thumb { appearance: none; width: 4px; height: 10px; background: #555; }
.pc { width: 34px; text-align: right; }

/* Taskbar */
.taskbar { display: flex; height: 35px; flex: none; background: #2c1f19; color: #fff; }
.taskbar > button { width: 43px; position: relative; }
.run::after { content: ""; position: absolute; left: 4px; right: 4px; bottom: 0; height: 2px; background: #fcb870; }
.opera { background: linear-gradient(#a51f21, #a51f21) 4px 0 / 35px 100% no-repeat; }
.opera::after { background: #f00; }
.run.cur { background: #54453f; }
.run.cur::after { left: 0; right: 0; }
.tray { display: flex; margin-left: auto; padding-right: 8px; }
.tray button { width: 21px; }
.tray .people { width: 28px; margin-right: 8px; }
.tray .lang { width: 32px; font-size: 11px; }
.tray .clock { width: 61px; flex-direction: column; line-height: 15px; }
.tray .note { position: relative; width: 36px; }
.note b { position: absolute; right: 12px; bottom: 5px; }

.watermark { position: absolute; right: 30px; bottom: 63px; width: 285px; color: #808080; opacity: .6; font-size: 12px; line-height: 18px; pointer-events: none; }
.watermark p { margin: 0; }
.watermark .wt { font-size: 16px; line-height: 20px; }
```
